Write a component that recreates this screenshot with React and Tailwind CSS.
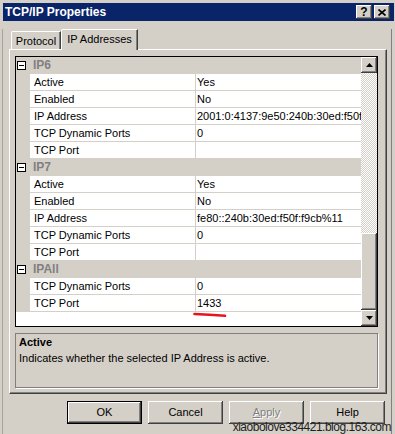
import React from "react";

const raised =
  "shadow-[inset_-1px_-1px_#404040,inset_1px_1px_#ffffff,inset_-2px_-2px_#808080,inset_2px_2px_#d4d0c8]";

function Arrow({ down }) {
  return (
    <svg width="7" height="4" viewBox="0 0 7 4">
      {down ? (
        <path d="M0 0H7L3.5 4Z" fill="#000" />
      ) : (
        <path d="M0 4H7L3.5 0Z" fill="#000" />
      )}
    </svg>
  );
}

function Header({ label }) {
  return (
    <div className="h-[17px] bg-[#d4d0c8] flex items-center shrink-0">
      <div className="ml-[1px] w-[9px] h-[9px] border border-[#000] bg-white flex items-center justify-center">
        <div className="w-[5px] h-[1px] bg-black" />
      </div>
      <span className="ml-[7px] font-bold text-[12px] leading-[17px] text-[#808080]">
        {label}
      </span>
    </div>
  );
}

function Row({ name, value }) {
  return (
    <div className="h-[17px] flex shrink-0">
      <div className="w-[14px] bg-[#d4d0c8]" />
      <div className="w-[166px] bg-white border-r border-b border-[#d4d0c8] pl-[4px] leading-[16px] whitespace-nowrap overflow-hidden">
        {name}
      </div>
      <div className="flex-1 bg-white border-b border-[#d4d0c8] pl-[1px] leading-[16px] whitespace-nowrap overflow-hidden">
        {value}
      </div>
    </div>
  );
}

function Btn({ children, def, disabled }) {
  return (
    <div
      className={
        "w-[75px] h-[23px] flex items-center justify-center bg-[#d4d0c8] " +
        (def
          ? "shadow-[inset_0_0_0_1px_#000000,inset_-2px_-2px_#404040,inset_2px_2px_#ffffff,inset_-3px_-3px_#808080]"
          : raised) +
        (disabled ? " text-[#808080] [text-shadow:1px_1px_0_#ffffff]" : "")
      }
    >
      {children}
    </div>
  );
}

export default function App() {
  return (
    <div className="w-[395px] h-[434px] bg-[#d4d0c8] relative overflow-hidden text-[11px] text-black font-['Liberation_Sans',Arial,sans-serif]">
      {/* title bar */}
      <div className="mt-[3px] ml-[3px] mr-[1px] h-[18px] bg-[#0a246a] flex items-start justify-between">
        <span className="pl-[2px] text-white font-bold text-[12px] leading-[18px]">
          TCP/IP Properties
        </span>
        <div className="flex gap-[2px] mt-[2px] mr-[4px]">
          <div className={"w-[16px] h-[14px] bg-[#d4d0c8] flex items-center justify-center font-bold text-[12px] leading-[14px] " + raised}>
            ?
          </div>
          <div className={"w-[16px] h-[14px] bg-[#d4d0c8] flex items-center justify-center " + raised}>
            <svg width="8" height="7" viewBox="0 0 8 7">
              <path d="M0.5 0.5L7.5 6.5M7.5 0.5L0.5 6.5" stroke="#000" strokeWidth="1.6" />
            </svg>
          </div>
        </div>
      </div>

      {/* client frame */}
      <div className="ml-[2px] w-[390px] h-[413px] border-l border-r border-l-[#a8a49c] border-r-[#808080]">
        {/* body */}
        <div className="pl-[6px] mt-[8px]">
          {/* tabs */}
          <div className="pl-[2px] h-[20px] flex items-end">
            <div className="w-[50px] h-[18px] border-t border-l border-white border-r border-r-[#404040] shadow-[inset_-1px_0_#808080] rounded-tl-[2px] flex items-center justify-center leading-[16px]">
              Protocol
            </div>
            <div className="relative z-10 -mb-px w-[77px] h-[21px] bg-[#d4d0c8] border-t border-l border-white border-r border-r-[#404040] shadow-[inset_-1px_0_#808080] rounded-tl-[2px] flex items-start justify-center pt-[1px] leading-[16px]">
              IP Addresses
            </div>
          </div>

          {/* panel */}
          <div className="w-[378px] h-[345px] border-t border-l border-white border-r border-b border-r-[#404040] border-b-[#404040] shadow-[inset_-1px_-1px_#808080] pl-[5px] pt-[6px]">
            {/* property grid */}
            <div className="w-[363px] h-[271px] border border-[#000000] flex relative">
              <div className="flex-1 bg-white flex flex-col overflow-hidden">
                <Header label="IP6" />
                <Row name="Active" value="Yes" />
                <Row name="Enabled" value="No" />
                <Row name="IP Address" value="2001:0:4137:9e50:240b:30ed:f50f:f9cb" />
                <Row name="TCP Dynamic Ports" value="0" />
                <Row name="TCP Port" value="" />
                <Header label="IP7" />
                <Row name="Active" value="Yes" />
                <Row name="Enabled" value="No" />
                <Row name="IP Address" value="fe80::240b:30ed:f50f:f9cb%11" />
                <Row name="TCP Dynamic Ports" value="0" />
                <Row name="TCP Port" value="" />
                <Header label="IPAll" />
                <Row name="TCP Dynamic Ports" value="0" />
                <Row name="TCP Port" value="1433" />
              </div>
              {/* scrollbar */}
              <div className="w-[16px] flex flex-col">
                <div className={"h-[16px] bg-[#d4d0c8] flex items-center justify-center " + raised}>
                  <Arrow />
                </div>
                <div className="h-[160px] bg-[image:repeating-conic-gradient(#d4d0c8_0_25%,#ffffff_0_50%)] bg-[length:2px_2px]" />
                <div className={"flex-1 bg-[#d4d0c8] " + raised} />
                <div className={"h-[16px] bg-[#d4d0c8] flex items-center justify-center " + raised}>
                  <Arrow down />
                </div>
              </div>
              {/* red annotation stroke */}
              <svg
                className="absolute left-[177px] top-[255px] pointer-events-none"
                width="36"
                height="6"
                viewBox="0 0 36 6"
              >
                <path d="M1.5 2 Q 16 2.4 32 3.8" stroke="#e8141c" strokeWidth="2.6" strokeLinecap="round" fill="none" />
              </svg>
            </div>

            {/* description */}
            <div className="mt-[6px] w-[363px] h-[55px] border border-[#808080] shadow-[1px_1px_0_#ffffff] px-[3px]">
              <div className="mt-[1px] font-bold leading-[14px]">Active</div>
              <div className="mt-[2px] leading-[14px]">
                Indicates whether the selected IP Address is active.
              </div>
            </div>
          </div>
        </div>

        {/* buttons */}
        <div className="mt-[7px] pr-[6px] flex justify-end gap-[6px]">
          <Btn def>OK</Btn>
          <Btn>Cancel</Btn>
          <Btn disabled>
            <span>
              <u>A</u>pply
            </span>
          </Btn>
          <Btn>Help</Btn>
        </div>
      </div>

      {/* watermark */}
      <div className="absolute right-[4px] bottom-0 text-[12px] leading-[13px] tracking-[-0.5px] text-[#1e1e1e]">
        xiaobolove334421.blog.163.com
      </div>
    </div>
  );
}
